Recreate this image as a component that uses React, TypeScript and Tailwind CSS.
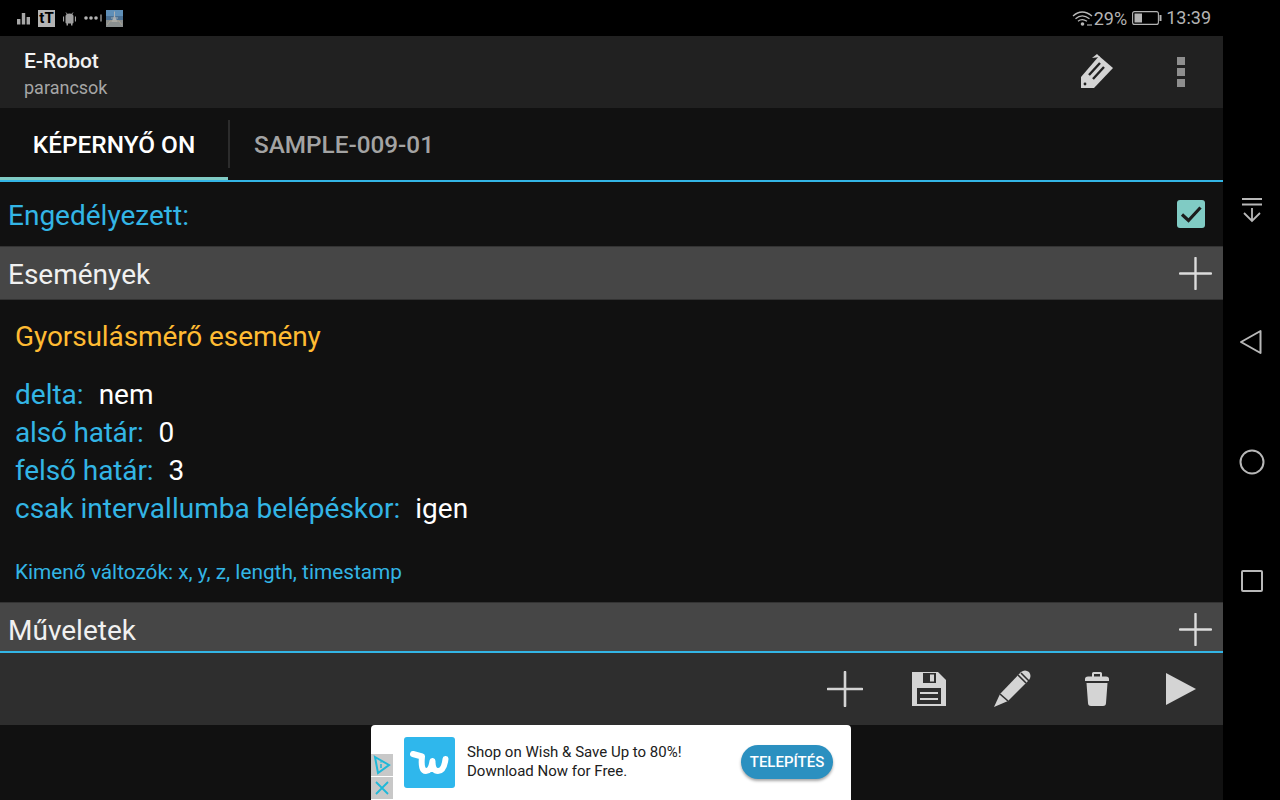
import React from "react";

const Plus = ({ size = 36, color = "#e0e0e0" }: { size?: number; color?: string }) => (
  <svg width={size} height={size} viewBox="0 0 36 36" className="block">
    <path d="M18 1V35M1 18H35" stroke={color} strokeWidth="2.6" strokeLinecap="round" />
  </svg>
);

const Field = ({ label, value, cls = "" }: { label: string; value: string; cls?: string }) => (
  <div className="h-[38px] flex items-center text-[28px] leading-[38px]">
    <span className={`text-[#33b5e5] ${cls}`}>{label}</span>
    <span className="text-white ml-[15px]">{value}</span>
  </div>
);

const SectionBar = ({ title, cls }: { title: string; cls: string }) => (
  <div className={`flex items-center justify-between bg-[#464646] pl-2 pr-[11px] ${cls}`}>
    <span className="text-[28px] text-[#f0f0f0] leading-none pt-[3px]">{title}</span>
    <Plus size={33} color="#dcdcdc" />
  </div>
);

export default function App() {
  return (
    <div className="w-[1280px] h-[800px] bg-black flex overflow-hidden" style={{ fontFamily: "Roboto, 'Liberation Sans', sans-serif" }}>
      <div className="w-[1223px] h-full flex flex-col shrink-0">
        {/* Status bar */}
        <div className="h-[36px] bg-black flex items-center justify-between pl-[17px] pr-[12px] shrink-0">
          <div className="flex items-center">
            <svg width="13" height="13" viewBox="0 0 13 13" className="mr-[8px]">
              <path d="M0 7H3.4V12.5H0ZM4.8 1H8.2V12.5H4.8ZM9.6 5H13V12.5H9.6Z" fill="#a8a8a8" />
            </svg>
            <div className="w-[17px] h-[17px] bg-[#b4b4b4] flex items-center justify-center text-[15px] font-bold text-black leading-none mr-[8px]">tT</div>
            <svg width="13" height="15" viewBox="0 0 13 15" className="mr-[8px]">
              <path d="M3 1.5L4.5 3.5M10 1.5L8.5 3.5" stroke="#999" strokeWidth="1" />
              <path d="M2.5 5.5Q2.5 2.5 6.5 2.5T10.5 5.5V11.5Q10.5 12.5 9.5 12.5V14.5H8V12.5H5V14.5H3.5V12.5Q2.5 12.5 2.5 11.5Z" fill="#a0a0a0" />
              <path d="M0.5 5.5V10.5M12.5 5.5V10.5" stroke="#a0a0a0" strokeWidth="1.2" />
            </svg>
            <svg width="18" height="8" viewBox="0 0 18 8" className="mr-[4px]">
              <circle cx="2" cy="4" r="1.8" fill="#b4b4b4" />
              <circle cx="7" cy="4" r="1.8" fill="#b4b4b4" />
              <circle cx="12" cy="4" r="1.8" fill="#b4b4b4" />
              <path d="M17 0.5V7.5" stroke="#b4b4b4" strokeWidth="1.2" />
            </svg>
            <svg width="17" height="17" viewBox="0 0 17 17">
              <rect width="17" height="17" fill="#4a7094" />
              <rect y="0" width="17" height="6" fill="#5f8fb8" />
              <rect y="10" width="17" height="7" fill="#8a8f90" />
              <path d="M8 1.5H9V6L11.5 12H5.5L8 6Z" fill="#aab0b4" />
              <path d="M1 15L4 11H13L16 15" stroke="#a9a294" strokeWidth="1" fill="none" />
              <path d="M5 8H12" stroke="#a0a8ae" strokeWidth="1" />
            </svg>
          </div>
          <div className="flex items-center">
            <svg width="21" height="17" viewBox="0 0 21 17" className="mr-[1px]">
              <path d="M1 6Q10 -2 20 6M3.5 8.8Q10 3 17.5 8.8M6 11.3Q10 8 15 11.3" stroke="#b8b8b8" strokeWidth="1.3" fill="none" />
              <circle cx="10.5" cy="14" r="1.8" fill="#b8b8b8" />
              <path d="M15 15H20" stroke="#888" strokeWidth="1.5" />
            </svg>
            <span className="text-[18px] text-[#b4b4b4] leading-none pt-[2px]">29%</span>
            <svg width="30" height="14" viewBox="0 0 30 14" className="ml-[5px] mr-[4px]">
              <rect x="0.6" y="0.6" width="25.8" height="12.8" rx="2" fill="none" stroke="#b4b4b4" strokeWidth="1.1" />
              <rect x="2.5" y="2.5" width="7.5" height="9" fill="#b4b4b4" />
              <rect x="27.5" y="4" width="2" height="6" fill="#b4b4b4" />
            </svg>
            <span className="text-[18px] text-[#b4b4b4] leading-none">13:39</span>
          </div>
        </div>

        {/* App bar */}
        <div className="h-[72px] bg-[#212121] flex items-center justify-between pl-[24px] shrink-0">
          <div className="flex flex-col pt-[4px]">
            <span className="text-[21px] leading-[26px] font-medium text-[#f2f2f2]">E-Robot</span>
            <span className="text-[18px] leading-[26px] text-[#a6a6a6] mt-[1px]">parancsok</span>
          </div>
          <div className="flex items-center">
            <svg width="34" height="38" viewBox="0 0 34 38">
              <path d="M12 5L17 1L20 4Z" fill="#d4d4d4" />
              <path d="M19 3L33 15L14 35L1 35L1 24Z" fill="#d4d4d4" />
              <path d="M9 22L20 10M13 26L24 14" stroke="#212121" strokeWidth="2.4" />
              <circle cx="5" cy="31" r="1.4" fill="#212121" />
            </svg>
            <div className="flex flex-col gap-[3px] ml-[63px] mr-[38px]">
              <div className="w-[8px] h-[8px] bg-[#8e8e8e]" />
              <div className="w-[8px] h-[8px] bg-[#8e8e8e]" />
              <div className="w-[8px] h-[8px] bg-[#8e8e8e]" />
            </div>
          </div>
        </div>

        {/* Tabs */}
        <div className="h-[74px] bg-[#111111] border-b-2 border-[#33b5e5] flex shrink-0">
          <div className="w-[228px] h-[72px] border-b-[3px] border-[#80cbc4] flex items-center justify-center text-[24.4px] font-medium text-white pt-[6px]">
            KÉPERNYŐ ON
          </div>
          <div className="w-[2px] h-[48px] bg-[#2c2c2c] mt-[12px]" />
          <div className="pl-[24px] h-[72px] flex items-center text-[24.3px] font-medium text-[#a3a3a3] pt-[3px]">SAMPLE-009-01</div>
        </div>

        {/* Enabled row */}
        <div className="h-[64px] bg-[#111111] flex items-center justify-between pl-2 pr-[18px] shrink-0">
          <span className="text-[28px] leading-none text-[#33b5e5] pt-[3px]">Engedélyezett:</span>
          <div className="w-[28px] h-[28px] bg-[#80cbc4] rounded-[3px] flex items-center justify-center">
            <svg width="22" height="18" viewBox="0 0 22 18">
              <path d="M2 9.5L8.5 15.5L20.5 2.5" stroke="#1c1c1c" strokeWidth="3.2" fill="none" />
            </svg>
          </div>
        </div>

        <SectionBar title="Események" cls="h-[54px] border-y border-[#333333] shrink-0" />

        {/* Content */}
        <div className="h-[302px] bg-[#111111] pl-[15px] flex flex-col shrink-0">
          <div className="text-[28px] leading-[38px] text-[#ffbb33] mt-[18px] tracking-[-0.1px]">Gyorsulásmérő esemény</div>
          <div className="mt-[20px]">
            <Field label="delta:" value="nem" />
            <Field label="alsó határ:" value="0" cls="tracking-[-0.2px]" />
            <Field label="felső határ:" value="3" cls="tracking-[-0.1px]" />
            <Field label="csak intervallumba belépéskor:" value="igen" />
          </div>
          <div className="text-[20.8px] leading-[28px] text-[#33b5e5] mt-[30px]">Kimenő változók: x, y, z, length, timestamp</div>
        </div>

        <SectionBar title="Műveletek" cls="h-[50px] border-t border-[#333333] pt-[4px] shrink-0" />
        <div className="h-[2px] bg-[#33b5e5] shrink-0 -mt-px" />

        {/* Toolbar */}
        <div className="h-[72px] bg-[#2e2e2e] flex items-center justify-end pr-[27px] shrink-0">
          <Plus color="#d4d4d4" />
          <svg width="36" height="36" viewBox="0 0 36 36" className="ml-[48px]">
            <path fillRule="evenodd" d="M1 1H27L35 9V35H1ZM12 2V12H25V2ZM19 3.5H23V10.5H19ZM6 17V33H30V17Z" fill="#d4d4d4" />
            <path d="M9 22H27M9 28H27" stroke="#d4d4d4" strokeWidth="2" />
          </svg>
          <svg width="40" height="40" viewBox="0 0 40 40" className="ml-[46px]">
            <path d="M1 38L7 25L28 3Q32 0 36 3Q39 7 36 11L15 32Z" fill="#d4d4d4" />
            <path d="M25 6L33 14M28 4L36 12" stroke="#2e2e2e" strokeWidth="1.6" />
            <path d="M7 25L15 32" stroke="#2e2e2e" strokeWidth="1.6" />
          </svg>
          <svg width="26" height="36" viewBox="0 0 26 36" className="ml-[51px]">
            <path d="M1 8Q1 5.5 4 5.5H8V2.5Q8 1 9.5 1H16.5Q18 1 18 2.5V5.5H22Q25 5.5 25 8V10H1ZM10 3V5.5H16V3Z" fill="#d4d4d4" fillRule="evenodd" />
            <path d="M2.5 12H23.5L22 32Q22 35 19 35H7Q4 35 4 32Z" fill="#d4d4d4" />
          </svg>
          <svg width="32" height="34" viewBox="0 0 32 34" className="ml-[55px] -mr-[1px]">
            <path d="M1 1L31 17L1 33Z" fill="#d4d4d4" />
          </svg>
        </div>

        {/* Ad */}
        <div className="flex-1 bg-[#111111] flex">
          <div className="w-[480px] h-full ml-[371px] bg-white rounded-tl-sm rounded-tr-sm flex items-center relative">
            <div className="absolute left-0 top-[29px] w-[22px] flex flex-col gap-px">
              <div className="w-[22px] h-[22px] bg-[#c8c8c8] flex items-center justify-center">
                <svg width="18" height="20" viewBox="0 0 18 20">
                  <path d="M2 2L16 10L5 18Z" stroke="#1fb8d8" strokeWidth="2" fill="none" />
                  <path d="M8 9V13M8 6.5V7.5" stroke="#1fb8d8" strokeWidth="1.6" />
                </svg>
              </div>
              <div className="w-[22px] h-[22px] bg-[#c8c8c8] flex items-center justify-center">
                <svg width="16" height="16" viewBox="0 0 16 16">
                  <path d="M2 2L14 14M14 2L2 14" stroke="#1fb8d8" strokeWidth="1.8" />
                </svg>
              </div>
            </div>
            <div className="w-[51px] h-[51px] rounded-[3px] bg-[#2fb7ec] ml-[33px] flex items-center justify-center shrink-0">
              <svg width="39" height="26" viewBox="0 0 39 26">
                <path d="M3 4L12 6.5Q10.5 21 16 21Q21 21 22.5 11Q22.5 21 28 21Q34 21 35.5 9" stroke="#fff" strokeWidth="6" fill="none" strokeLinecap="round" strokeLinejoin="round" />
              </svg>
            </div>
            <div className="ml-[12px] text-[15px] leading-[19px] text-[#202020] -mt-[1px]">
              <div>Shop on Wish &amp; Save Up to 80%!</div>
              <div>Download Now for Free.</div>
            </div>
            <div className="absolute left-[370px] top-[20px] w-[92px] h-[34px] rounded-full bg-[#2b90c0] text-white text-[15px] font-medium flex items-center justify-center shadow-[0_2px_3px_rgba(0,0,0,0.35)]">
              TELEPÍTÉS
            </div>
          </div>
        </div>
      </div>

      {/* Nav bar */}
      <div className="flex-1 bg-black flex flex-col items-center pt-[197px]">
        <svg width="22" height="26" viewBox="0 0 22 26">
          <path d="M1 2H21M1 7.5H21" stroke="#b8b8b8" strokeWidth="1.8" />
          <path d="M11 11V23M3 16L11 24L19 16" stroke="#b8b8b8" strokeWidth="1.8" fill="none" />
        </svg>
        <svg width="24" height="26" viewBox="0 0 24 26" className="mt-[106px] -ml-[1px]">
          <path d="M2 13L21.5 2V24Z" stroke="#b8b8b8" strokeWidth="2" strokeLinejoin="round" fill="none" />
        </svg>
        <svg width="26" height="26" viewBox="0 0 26 26" className="mt-[94px]">
          <circle cx="13" cy="13" r="11.5" stroke="#b8b8b8" strokeWidth="2" fill="none" />
        </svg>
        <svg width="24" height="24" viewBox="0 0 24 24" className="mt-[94px]">
          <rect x="2" y="2" width="20" height="20" rx="1" stroke="#b8b8b8" strokeWidth="2" fill="none" />
        </svg>
      </div>
    </div>
  );
}
